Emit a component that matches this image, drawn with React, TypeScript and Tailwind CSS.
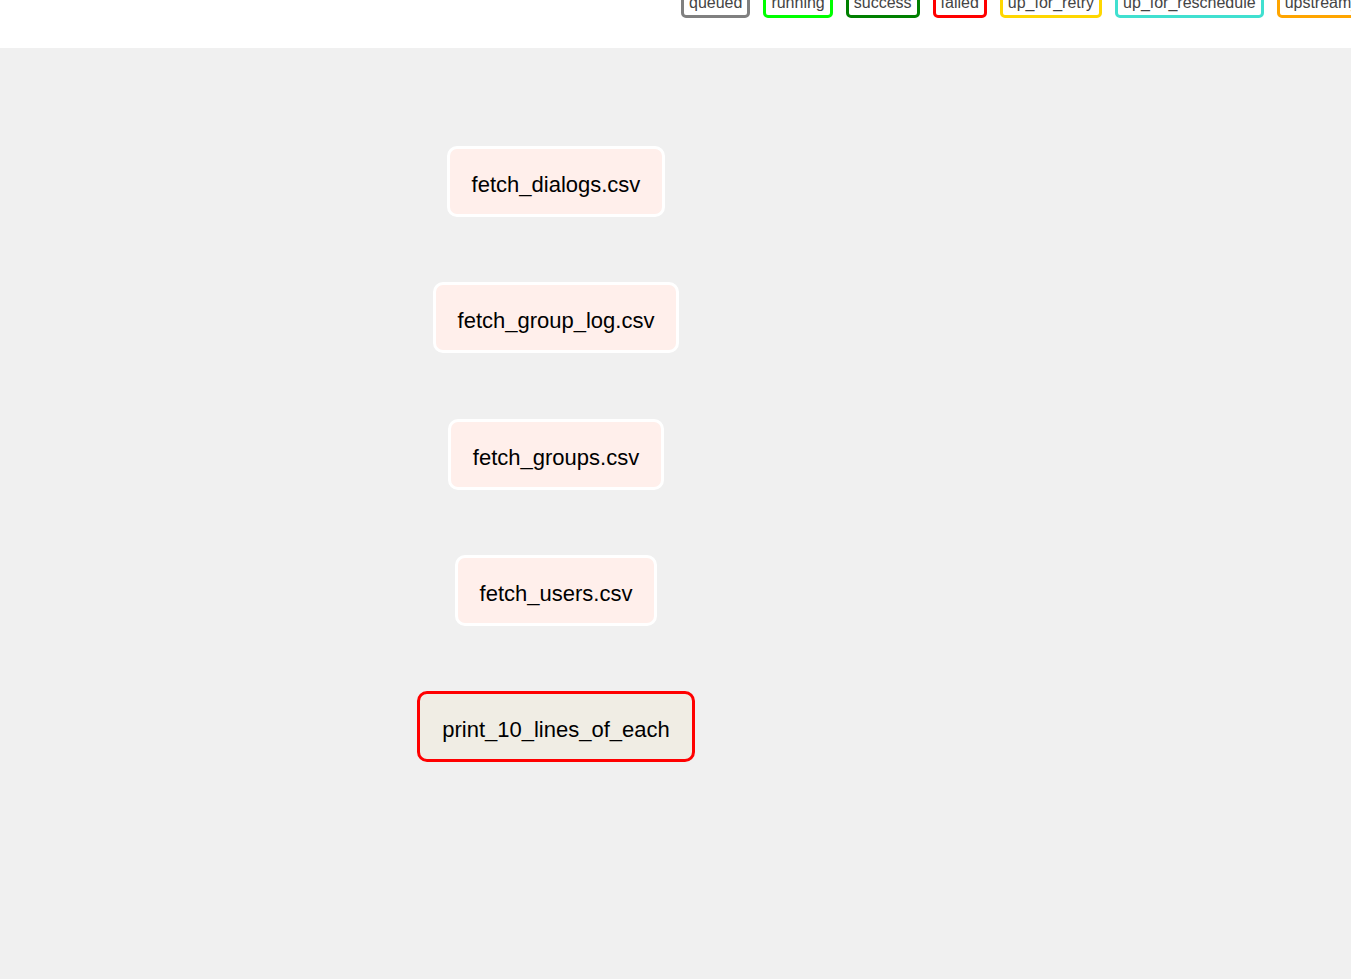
const states = [
  { name: "queued", border: "border-[#808080]" },
  { name: "running", border: "border-[#00ff00]" },
  { name: "success", border: "border-[#008000]" },
  { name: "failed", border: "border-[#ff0000]" },
  { name: "up_for_retry", border: "border-[#ffd700]" },
  { name: "up_for_reschedule", border: "border-[#40e0d0]" },
  { name: "upstream_failed", border: "border-[#ffa500]" },
  { name: "skipped", border: "border-[#ff69b4]" },
];

const tasks = [
  { id: "fetch_dialogs.csv", failed: false },
  { id: "fetch_group_log.csv", failed: false },
  { id: "fetch_groups.csv", failed: false },
  { id: "fetch_users.csv", failed: false },
  { id: "print_10_lines_of_each", failed: true },
];

export default function App() {
  return (
    <div
      className="flex min-h-screen flex-col bg-[#f0f0f0]"
      style={{ fontFamily: '"Liberation Sans", Arial, sans-serif' }}
    >
      <header className="h-[48px] shrink-0 overflow-hidden bg-white">
        <div className="-mt-[11px] flex gap-[13px] whitespace-nowrap pl-[681px]">
          {states.map((s) => (
            <span
              key={s.name}
              className={`shrink-0 rounded-[5px] border-[3px] bg-white px-[5px] pt-[1px] pb-[2px] text-[16px] leading-[20px] text-[#444] ${s.border}`}
            >
              {s.name}
            </span>
          ))}
        </div>
      </header>
      <main className="flex-1">
        <div className="flex w-[1112px] flex-col items-center gap-[65.25px] pt-[98px]">
          {tasks.map((t) => (
            <div
              key={t.id}
              className={`rounded-[10px] border-[3px] px-[22px] pt-[23px] pb-[17px] text-[22px] leading-[25px] whitespace-nowrap text-black ${
                t.failed ? "border-[#ff0000] bg-[#f0ede4]" : "border-white bg-[#ffefeb]"
              }`}
            >
              {t.id}
            </div>
          ))}
        </div>
      </main>
    </div>
  );
}
